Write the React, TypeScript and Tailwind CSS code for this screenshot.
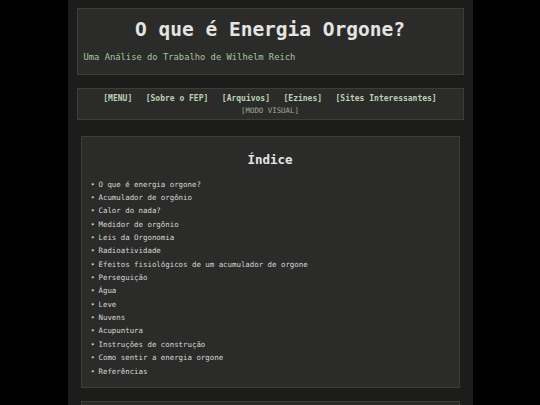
import React from "react";

const items = [
  "O que é energia orgone?",
  "Acumulador de orgônio",
  "Calor do nada?",
  "Medidor de orgônio",
  "Leis da Orgonomia",
  "Radioatividade",
  "Efeitos fisiológicos de um acumulador de orgone",
  "Perseguição",
  "Água",
  "Leve",
  "Nuvens",
  "Acupuntura",
  "Instruções de construção",
  "Como sentir a energia orgone",
  "Referências",
];

const nav = ["[MENU]", "[Sobre o FEP]", "[Arquivos]", "[Ezines]", "[Sites Interessantes]"];

export default function App() {
  return (
    <div
      className="min-h-screen w-full bg-black overflow-hidden"
      style={{ fontFamily: '"DejaVu Sans Mono", "Liberation Mono", monospace' }}
    >
      <div className="mx-auto w-[405px] min-h-[405px] bg-[#1c1d1b] px-[9px] pt-[8px] pb-4">
        <header className="border border-[#3b3d3a] bg-[#2b2c2a] pt-[9px] pb-[11px] px-[6px]">
          <h1 className="text-center text-[19.5px] leading-[24px] font-bold text-[#e4e4e2]">
            O que é Energia Orgone?
          </h1>
          <p className="mt-[8.5px] text-[8.8px] leading-[12px] text-[#a6c49c]">
            Uma Análise do Trabalho de Wilhelm Reich
          </p>
        </header>

        <nav className="mt-[13px] border border-[#3b3d3a] bg-[#2b2c2a] pt-[4px] pb-[3px] text-center">
          <div className="flex justify-center gap-[13.5px] text-[8px] leading-[12px] font-bold text-[#bcd2b4]">
            {nav.map((n) => (
              <span key={n}>{n}</span>
            ))}
          </div>
          <div className="mt-[1px] text-[7.4px] leading-[10px] text-[#a3aa9c]">[MODO VISUAL]</div>
        </nav>

        <section className="mx-[4px] mt-[16px] border border-[#3b3d3a] bg-[#2b2c2a] pt-[15px] pb-[9px] px-[9px]">
          <h2 className="text-center text-[12.5px] leading-[16px] font-bold text-[#e4e4e2]">Índice</h2>
          <ul className="mt-[10px]">
            {items.map((it) => (
              <li key={it} className="flex text-[7.4px] leading-[13.36px] text-[#d6d6d4]">
                <span className="w-[8px] shrink-0 text-[#c8c8c6]">•</span>
                <span>{it}</span>
              </li>
            ))}
          </ul>
        </section>

        <section className="mx-[4px] mt-[13px] h-[60px] border border-[#3b3d3a] bg-[#2b2c2a]" />
      </div>
    </div>
  );
}
